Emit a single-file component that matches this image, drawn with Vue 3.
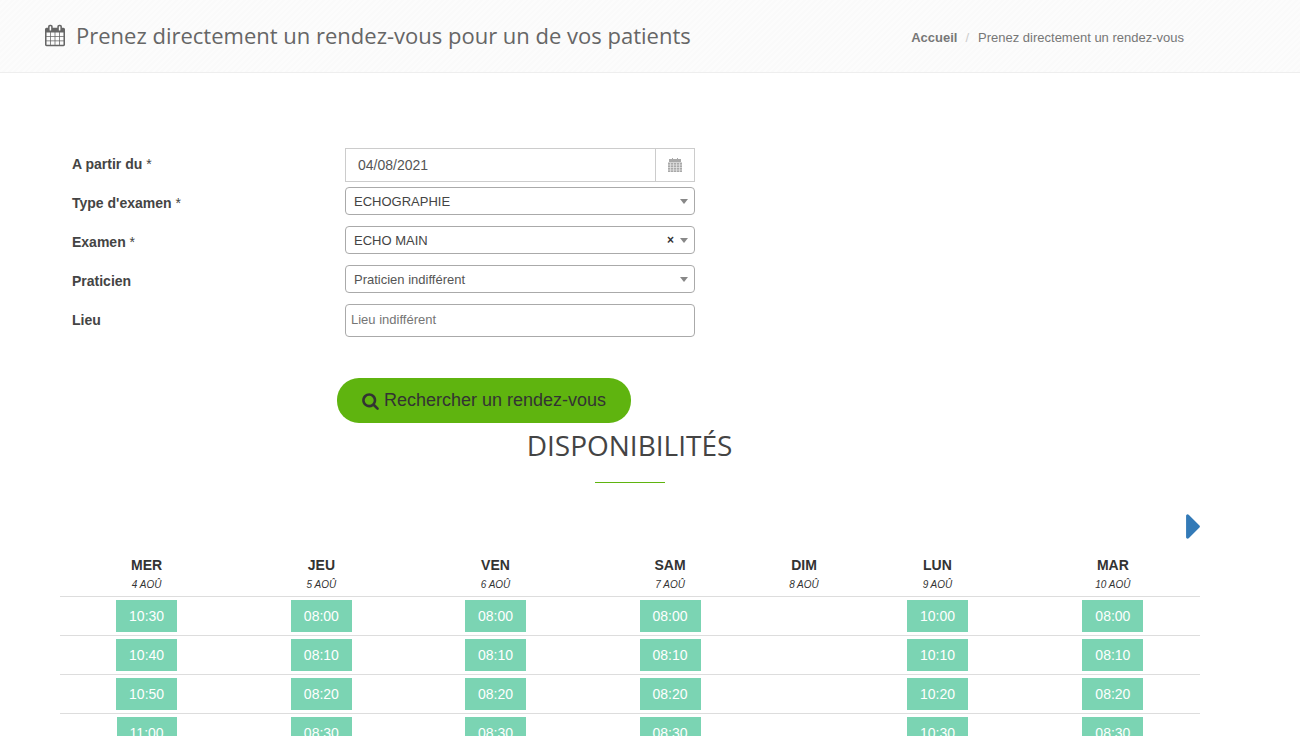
<script setup>
const days = [
  { name: "MER", date: "4 AOÛ", slots: ["10:30", "10:40", "10:50", "11:00"] },
  { name: "JEU", date: "5 AOÛ", slots: ["08:00", "08:10", "08:20", "08:30"] },
  { name: "VEN", date: "6 AOÛ", slots: ["08:00", "08:10", "08:20", "08:30"] },
  { name: "SAM", date: "7 AOÛ", slots: ["08:00", "08:10", "08:20", "08:30"] },
  { name: "DIM", date: "8 AOÛ", slots: [] },
  { name: "LUN", date: "9 AOÛ", slots: ["10:00", "10:10", "10:20", "10:30"] },
  { name: "MAR", date: "10 AOÛ", slots: ["08:00", "08:10", "08:20", "08:30"] },
];
const rows = [0, 1, 2, 3];
const colWidths = [173.2, 176.4, 171.8, 177.4, 90.4, 176.6, 174.2];
</script>

<template>
  <div class="page">
    <header class="top">
      <h1>
        <svg class="cal" viewBox="0 0 1664 1792">
          <path fill="currentColor" d="M128 1664h288v-288h-288v288zm352 0h320v-288h-320v288zm-352-352h288v-320h-288v320zm352 0h320v-320h-320v320zm-352-384h288v-288h-288v288zm736 736h320v-288h-320v288zm-384-736h320v-288h-320v288zm768 736h288v-288h-288v288zm-384-352h320v-320h-320v320zm-352-864v-288q0-13-9.5-22.5t-22.5-9.5h-64q-13 0-22.5 9.5t-9.5 22.5v288q0 13 9.5 22.5t22.5 9.5h64q13 0 22.5-9.5t9.5-22.5zm736 864h288v-320h-288v320zm-384-384h320v-288h-320v288zm384 0h288v-288h-288v288zm32-480v-288q0-13-9.5-22.5t-22.5-9.5h-64q-13 0-22.5 9.5t-9.5 22.5v288q0 13 9.5 22.5t22.5 9.5h64q13 0 22.5-9.5t9.5-22.5zm384-64v1280q0 52-38 90t-90 38h-1408q-52 0-90-38t-38-90v-1280q0-52 38-90t90-38h128v-96q0-66 47-113t113-47h64q66 0 113 47t47 113v96h384v-96q0-66 47-113t113-47h64q66 0 113 47t47 113v96h128q52 0 90 38t38 90z" />
        </svg>
        Prenez directement un rendez-vous pour un de vos patients
      </h1>
      <nav class="crumbs">
        <a>Accueil</a>
        <span class="sep">/</span>
        <span>Prenez directement un rendez-vous</span>
      </nav>
    </header>

    <form class="form">
      <div class="row">
        <label>A partir du <span class="req">*</span></label>
        <div class="date">
          <span class="date-value">04/08/2021</span>
          <span class="addon">
            <svg viewBox="0 0 14 14" width="14" height="14">
              <path fill="#a9a9a9" d="M1 1h3V0h1v1h4V0h1v1h3v3H1z" />
              <path fill="#a9a9a9" d="M0 4.5h14V14H0z" />
              <path stroke="#e8e8e8" stroke-width="0.7" d="M0 7h14M0 9.5h14M0 12h14M2.5 5v9M5.5 5v9M8.5 5v9M11.5 5v9" />
            </svg>
          </span>
        </div>
      </div>
      <div class="row">
        <label>Type d'examen <span class="req">*</span></label>
        <div class="select"><span class="val">ECHOGRAPHIE</span><i class="arrow"></i></div>
      </div>
      <div class="row">
        <label>Examen <span class="req">*</span></label>
        <div class="select"><span class="val">ECHO MAIN</span><b class="clear">×</b><i class="arrow"></i></div>
      </div>
      <div class="row">
        <label>Praticien</label>
        <div class="select"><span class="val muted">Praticien indifférent</span><i class="arrow"></i></div>
      </div>
      <div class="row">
        <label>Lieu</label>
        <div class="text-input">Lieu indifférent</div>
      </div>
    </form>

    <button type="button" class="search">
      <svg viewBox="0 0 1664 1792" width="17" height="18">
        <path fill="currentColor" d="M1152 832q0-185-131.5-316.5t-316.5-131.5-316.5 131.5-131.5 316.5 131.5 316.5 316.5 131.5 316.5-131.5 131.5-316.5zm512 832q0 52-38 90t-90 38q-54 0-90-38l-343-342q-179 124-399 124-143 0-273.5-55.5t-225-150-150-225-55.5-273.5 55.5-273.5 150-225 225-150 273.5-55.5 273.5 55.5 225 150 150 225 55.5 273.5q0 220-124 399l343 343q37 37 37 90z" />
      </svg>
      Rechercher un rendez-vous
    </button>

    <h2 class="title">DISPONIBILITÉS</h2>
    <div class="rule"></div>

    <section class="planning">
      <div class="next">
        <svg viewBox="0 0 576 1792" width="14" height="43">
          <path fill="#337ab7" d="M576 896q0 26-19 45l-448 448q-19 19-45 19t-45-19-19-45v-896q0-26 19-45t45-19 45 19l448 448q19 19 19 45z" />
        </svg>
      </div>
      <table>
        <colgroup>
          <col v-for="(w, i) in colWidths" :key="i" :style="{ width: w + 'px' }" />
        </colgroup>
        <thead>
          <tr>
            <th v-for="d in days" :key="d.name">
              <div class="day">{{ d.name }}</div>
              <div class="day-date">{{ d.date }}</div>
            </th>
          </tr>
        </thead>
        <tbody>
          <tr v-for="r in rows" :key="r">
            <td v-for="d in days" :key="d.name">
              <a v-if="d.slots[r]" class="slot">{{ d.slots[r] }}</a>
            </td>
          </tr>
        </tbody>
      </table>
    </section>
  </div>
</template>

<style>
html,
body {
  overflow: hidden;
  background: #fff;
}
</style>

<style scoped>
.page {
  font-family: "Liberation Sans", Arial, sans-serif;
  color: #444;
  height: 736px;
  overflow: hidden;
}

.top {
  height: 72px;
  display: flex;
  align-items: center;
  justify-content: space-between;
  padding: 0 116px 0 45px;
  background: repeating-linear-gradient(135deg, #fafafa 0 2px, #fcfcfc 2px 4px);
  border-bottom: 1px solid #eeeeee;
}

h1 {
  margin: 0 0 2px;
  font-family: "Open Sans", sans-serif;
  font-size: 22px;
  font-weight: 400;
  color: #666;
  display: flex;
  align-items: center;
  gap: 11px;
}

.cal {
  width: 20px;
  height: 23px;
}

.crumbs {
  margin-top: 2px;
  font-size: 13px;
  color: #777;
  display: flex;
  gap: 8px;
}

.crumbs a {
  font-weight: 700;
}

.sep {
  color: #ccc;
  margin-right: 1px;
}

.form {
  margin: 75px 0 0 72px;
  width: 623px;
}

.row {
  display: grid;
  grid-template-columns: 273px 350px;
  height: 39px;
  align-items: start;
}

label {
  font-size: 14px;
  font-weight: 700;
  line-height: 20px;
  padding-top: 6px;
  color: #444;
}

.req {
  font-weight: 400;
}

.date {
  height: 34px;
  box-sizing: border-box;
  border: 1px solid #ccc;
  display: flex;
  align-items: center;
  font-size: 14px;
  color: #555;
}

.date-value {
  flex: 1;
  padding-left: 12px;
}

.addon {
  width: 38px;
  height: 100%;
  border-left: 1px solid #ccc;
  display: flex;
  align-items: center;
  justify-content: center;
}

.select {
  height: 28px;
  box-sizing: border-box;
  border: 1px solid #aaa;
  border-radius: 4px;
  display: flex;
  align-items: center;
  padding: 0 6px 0 8px;
  font-size: 13px;
  color: #444;
}

.val {
  flex: 1;
}

.muted {
  color: #555;
}

.clear {
  font-size: 12px;
  margin-right: 6px;
  color: #333;
}

.arrow {
  width: 0;
  height: 0;
  border-left: 4px solid transparent;
  border-right: 4px solid transparent;
  border-top: 5px solid #888;
}

.text-input {
  height: 33px;
  box-sizing: border-box;
  border: 1px solid #aaa;
  border-radius: 4px;
  padding-left: 5px;
  line-height: 29px;
  font-size: 13px;
  color: #757575;
}

.search {
  display: flex;
  align-items: center;
  gap: 5px;
  margin: 35px 0 0 337px;
  width: 294px;
  height: 45px;
  padding: 0 0 0 25px;
  border: none;
  border-radius: 22px;
  background: #5fb40f;
  color: #333;
  font-family: inherit;
  font-size: 18px;
}

.title {
  margin: 4px 0 0;
  width: 1259px;
  text-align: center;
  font-family: "Open Sans", sans-serif;
  font-size: 28px;
  line-height: 36px;
  font-weight: 400;
  color: #444;
}

.rule {
  width: 70px;
  height: 1px;
  background: #5fb40f;
  margin: 19px 0 0 595px;
}

.planning {
  margin: 0 100px 0 60px;
}

.next {
  display: flex;
  justify-content: flex-end;
  height: 72px;
  padding-top: 22px;
  box-sizing: border-box;
}

table {
  width: 1140px;
  table-layout: fixed;
  border-collapse: collapse;
}

th {
  padding: 0 0 3px;
  height: 41px;
  box-sizing: border-box;
  text-align: center;
}

.day {
  font-size: 14px;
  line-height: 20px;
  font-weight: 700;
  color: #333;
}

.day-date {
  margin-top: 2px;
  font-size: 10px;
  line-height: 16px;
  font-style: italic;
  font-weight: 400;
  color: #333;
}

td {
  height: 39px;
  box-sizing: border-box;
  padding: 0;
  border-top: 1px solid #ddd;
  text-align: center;
  vertical-align: top;
}

.slot {
  display: inline-block;
  margin-top: 3px;
  padding: 0 13px;
  height: 32px;
  line-height: 32px;
  font-size: 14px;
  background: #7bd4b3;
  color: #fff;
}
</style>
